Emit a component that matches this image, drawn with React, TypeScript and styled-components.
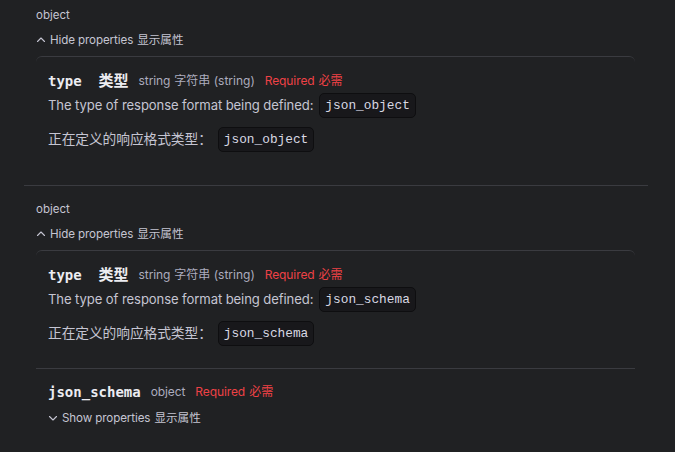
import React from 'react'
import styled, { createGlobalStyle } from 'styled-components'

const GlobalStyle = createGlobalStyle`
  html, body {
    margin: 0;
    padding: 0;
    background: #202123;
  }
  body {
    font-family: Inter, "Noto Sans CJK SC", sans-serif;
    color: #c5c5d2;
  }
`

const Page = styled.div`
  width: 624px;
  padding-left: 24px;
`

const Item = styled.section`
  border-top: 1px solid #3a3b40;
  padding: 12px 13px 11px 12px;
  &:first-child {
    border-top: none;
    padding-top: 4px;
  }
`

const TypeLabel = styled.div`
  font-size: 11.5px;
  line-height: 22px;
  color: #c5c5d2;
`

const Toggle = styled.div`
  display: flex;
  align-items: center;
  gap: 4px;
  margin-top: 3px;
  font-size: 11.6px;
  line-height: 22px;
  letter-spacing: -0.1px;
  color: #c5c5d2;
  cursor: pointer;
  svg {
    flex-shrink: 0;
  }
`

const Props = styled.div`
  margin-top: 5px;
`

const Property = styled.div`
  border-top: 1px solid #3a3b40;
  padding: 11px 12px 22px;
  &:first-child {
    border-top-left-radius: 6px;
    border-top-right-radius: 6px;
  }
`

const NameRow = styled.div`
  display: flex;
  align-items: center;
  gap: 10px;
  line-height: 24px;
`

const Name = styled.span`
  font-family: "DejaVu Sans Mono", "Noto Sans CJK SC", monospace;
  font-size: 14px;
  font-weight: 700;
  color: #ececf1;
  white-space: pre;
`

const Zh = styled.span`
  font-family: "Noto Sans CJK SC", sans-serif;
  font-size: 15px;
`

const Meta = styled.span<{ $red?: boolean }>`
  font-size: 12px;
  letter-spacing: -0.1px;
  color: ${p => (p.$red ? '#ef4146' : '#acacbe')};
`

// CJK translation that follows an English label
const Tr = styled.span`
  margin-left: 4px;
  letter-spacing: 0;
`

const Line = styled.div<{ $gap?: number; $size?: number }>`
  display: flex;
  align-items: center;
  gap: 6px;
  margin-top: ${p => p.$gap || 0}px;
  font-size: ${p => p.$size || 13.1}px;
  line-height: 25px;
  letter-spacing: -0.1px;
  color: #c5c5d2;
`

const Code = styled.code`
  display: inline-block;
  font-family: "Liberation Mono", monospace;
  font-size: 12.8px;
  line-height: 23px;
  letter-spacing: 0;
  padding: 0 5px;
  background: #18181b;
  border: 1px solid #0e0e10;
  border-radius: 5px;
  color: #d9d9e3;
`

const Chevron = ({ up }: { up?: boolean }) => (
  <svg width="10" height="10" viewBox="0 0 10 10" fill="none">
    <polyline
      points={up ? '1.5,6.5 5,3 8.5,6.5' : '1.5,3.5 5,7 8.5,3.5'}
      stroke="#c5c5d2"
      strokeWidth="1.1"
      strokeLinecap="round"
      strokeLinejoin="round"
    />
  </svg>
)

const TypeField = ({ value }: { value: string }) => (
  <Property>
    <NameRow>
      <Name>
        {'type  '}
        <Zh>类型</Zh>
      </Name>
      <Meta>
        string<Tr>字符串 (string)</Tr>
      </Meta>
      <Meta $red>
        Required<Tr>必需</Tr>
      </Meta>
    </NameRow>
    <Line>
      The type of response format being defined:
      <Code>{value}</Code>
    </Line>
    <Line $gap={9} $size={13.75}>
      正在定义的响应格式类型：
      <Code>{value}</Code>
    </Line>
  </Property>
)

export default function App() {
  return (
    <>
      <GlobalStyle />
      <Page>
        <Item>
          <TypeLabel>object</TypeLabel>
          <Toggle>
            <Chevron up />
            <span>
              Hide properties<Tr>显示属性</Tr>
            </span>
          </Toggle>
          <Props>
            <TypeField value="json_object" />
          </Props>
        </Item>
        <Item>
          <TypeLabel>object</TypeLabel>
          <Toggle>
            <Chevron up />
            <span>
              Hide properties<Tr>显示属性</Tr>
            </span>
          </Toggle>
          <Props>
            <TypeField value="json_schema" />
            <Property>
              <NameRow>
                <Name>json_schema</Name>
                <Meta>object</Meta>
                <Meta $red>
                  Required<Tr>必需</Tr>
                </Meta>
              </NameRow>
              <Toggle>
                <Chevron />
                <span>
                  Show properties<Tr>显示属性</Tr>
                </span>
              </Toggle>
            </Property>
          </Props>
        </Item>
      </Page>
    </>
  )
}
